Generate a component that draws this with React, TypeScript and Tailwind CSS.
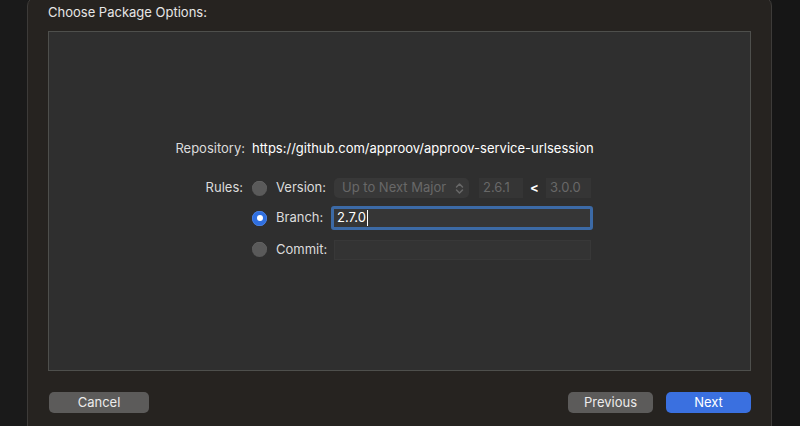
import React from "react";

function Radio({ on }: { on?: boolean }) {
  return on ? (
    <div className="w-[15px] h-[15px] rounded-full bg-[#2f6fe0] flex items-center justify-center shadow-[inset_0_0_0_0.5px_#5a8ff0]">
      <div className="w-[6px] h-[6px] rounded-full bg-white" />
    </div>
  ) : (
    <div className="w-[15px] h-[15px] rounded-full bg-[#5a5a5a] shadow-[inset_0_0.5px_0_#6e6e6e]" />
  );
}

export default function App() {
  return (
    <div
      className="w-[800px] h-[426px] overflow-hidden flex bg-[#1a1a1a]"
      style={{ fontFamily: "Inter, 'Liberation Sans', sans-serif" }}
    >
      <div className="w-[27px] shrink-0" />
      <div className="w-[745px] h-[436px] -mt-[4px] rounded-t-[10px] bg-[#262320] border border-[#3d3b39] flex flex-col pl-[20px] pr-[20px]">
        <div className="h-[34px] flex items-end pb-[12px] text-[13px] text-[#e6e6e6] leading-none">
          Choose Package Options:
        </div>
        <div className="h-[340px] bg-[#2f2f2f] border border-[#4e4f4c] flex flex-col pt-[107px] text-[13px] text-[#e2e2e2]">
          <div className="flex items-center h-[20px]">
            <div className="w-[196px] text-right text-[#dcdcdc]">Repository:</div>
            <div className="ml-[7px] text-white">https://github.com/approov/approov-service-urlsession</div>
          </div>
          <div className="flex items-center h-[20px] mt-[19px]">
            <div className="w-[194px] text-right text-[#dcdcdc]">Rules:</div>
            <div className="ml-[9px] flex items-center">
              <Radio />
              <div className="ml-[9px] w-[58px] text-[#dcdcdc]">Version:</div>
              <div className="w-[135px] h-[20px] rounded-[5px] bg-[#383838] flex items-center justify-between pl-[8px] pr-[5px] text-[#686868]">
                <span>Up to Next Major</span>
                <svg width="9" height="13" viewBox="0 0 9 13" fill="none" stroke="#686868" strokeWidth="1.5" strokeLinecap="round" strokeLinejoin="round">
                  <path d="M1.5 5L4.5 2L7.5 5" />
                  <path d="M1.5 8L4.5 11L7.5 8" />
                </svg>
              </div>
              <div className="ml-[10px] w-[44px] h-[20px] bg-[#353535] flex items-center pl-[4px] text-[#686868]">2.6.1</div>
              <div className="w-[23px] text-center text-white font-bold">&lt;</div>
              <div className="w-[45px] h-[20px] bg-[#353535] flex items-center pl-[4px] text-[#686868]">3.0.0</div>
            </div>
          </div>
          <div className="flex items-center h-[24px] mt-[8px]">
            <div className="w-[194px]" />
            <div className="ml-[9px] flex items-center">
              <Radio on />
              <div className="ml-[9px] w-[55px] text-[#dcdcdc]">Branch:</div>
              <div className="w-[262px] h-[24px] rounded-[3px] border-[3px] border-[#3c6aa6] bg-[#363636] flex items-center pl-[3px] text-white">
                <span>2.7.0</span>
                <span className="w-px h-[16px] bg-white ml-px" />
              </div>
            </div>
          </div>
          <div className="flex items-center h-[21px] mt-[9px]">
            <div className="w-[194px]" />
            <div className="ml-[9px] flex items-center">
              <Radio />
              <div className="ml-[9px] w-[58px] text-[#dcdcdc]">Commit:</div>
              <div className="w-[257px] h-[20px] bg-[#333333] border border-[#383838]" />
            </div>
          </div>
        </div>
        <div className="flex items-center justify-between mt-[21px] pl-px text-[13px] text-[#ececec]">
          <div className="w-[100px] h-[21px] rounded-[5px] bg-[#5c5b5a] flex items-center justify-center">Cancel</div>
          <div className="flex items-center">
            <div className="w-[85px] h-[21px] rounded-[5px] bg-[#5c5b5a] flex items-center justify-center">Previous</div>
            <div className="ml-[13px] w-[85px] h-[21px] rounded-[5px] bg-[#3a70e0] text-white flex items-center justify-center">Next</div>
          </div>
        </div>
      </div>
      <div className="flex-1 bg-[#161616]" />
    </div>
  );
}
